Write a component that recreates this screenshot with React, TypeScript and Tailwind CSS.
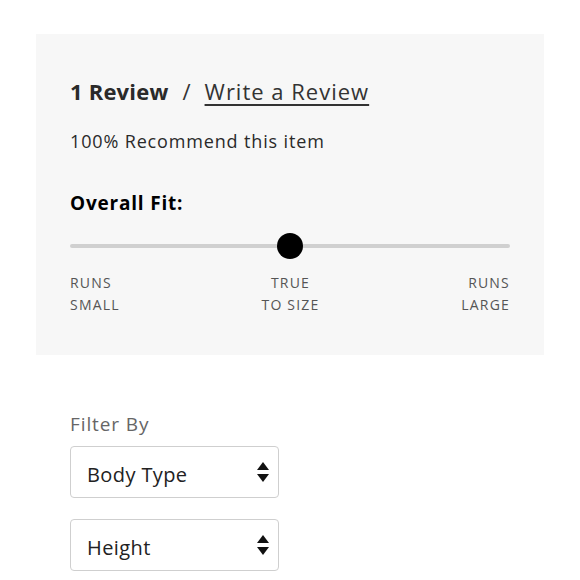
import React from "react";

function Arrows() {
  return (
    <svg width="12" height="20" viewBox="0 0 12 20" className="shrink-0">
      <path d="M6 0 L12 8 L0 8 Z" fill="#111" />
      <path d="M0 12 L12 12 L6 20 Z" fill="#111" />
    </svg>
  );
}

function Select({ label }: { label: string }) {
  return (
    <div className="flex h-[52px] w-[209px] items-center justify-between rounded-[4px] border border-[#cfcfcf] bg-white pl-[16px] pr-[9px]">
      <span className="pt-[5px] text-[20px] leading-none tracking-[0.4px] text-[#222]">{label}</span>
      <Arrows />
    </div>
  );
}

export default function App() {
  return (
    <div className="h-[580px] w-[580px] overflow-hidden bg-white pt-[34px] font-['Open_Sans',sans-serif] text-[#222]">
      <div className="ml-[36px] h-[321px] w-[508px] bg-[#f7f7f7] px-[34px] pt-[42px]">
        <div className="flex h-[30px] items-center text-[22px] leading-[30px]">
          <span className="font-bold tracking-[0.2px] text-[#2a2a2a]">1 Review</span>
          <span className="mx-[14px] text-[#333]">/</span>
          <span className="underline decoration-[1.5px] underline-offset-[4px] tracking-[1px] text-[#333]">Write a Review</span>
        </div>
        <div className="mt-[24px] h-[22px] text-[18px] leading-[22px] tracking-[0.85px] text-[#2a2a2a]">
          100% Recommend this item
        </div>
        <div className="mt-[39px] h-[24px] text-[19px] font-bold leading-[24px] tracking-[0.8px] text-black">Overall Fit:</div>
        <div className="relative mt-[18px] h-[26px]">
          <div className="absolute left-0 right-0 top-[11px] h-[4px] rounded-full bg-[#d0d0d0]" />
          <div className="absolute left-[207px] top-0 h-[26px] w-[26px] rounded-full bg-black" />
        </div>
        <div className="mt-[13px] flex justify-between text-[14px] leading-[22px] tracking-[1.2px] text-[#555]">
          <div className="text-left">RUNS<br />SMALL</div>
          <div className="text-center">TRUE<br />TO SIZE</div>
          <div className="text-right">RUNS<br />LARGE</div>
        </div>
      </div>
      <div className="px-[70px] pt-[57px]">
        <div className="h-[24px] text-[19px] leading-[24px] tracking-[0.9px] text-[#666]">Filter By</div>
        <div className="mt-[10px]">
          <Select label="Body Type" />
        </div>
        <div className="mt-[21px]">
          <Select label="Height" />
        </div>
      </div>
    </div>
  );
}
